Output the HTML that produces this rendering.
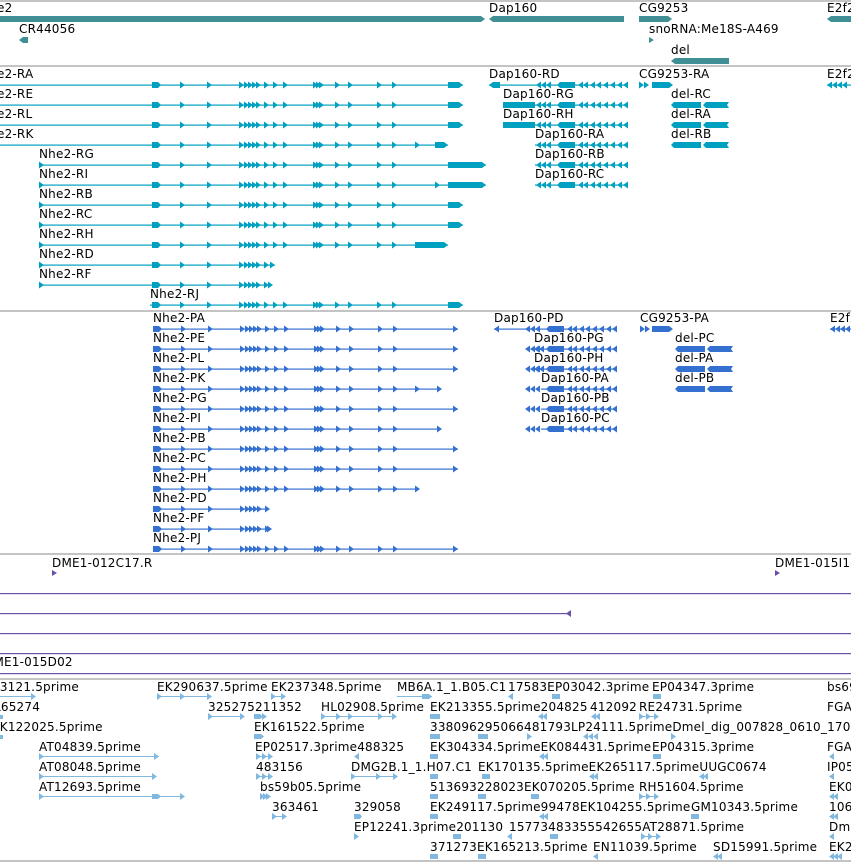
<!DOCTYPE html>
<html><head><meta charset="utf-8">
<style>
html,body{margin:0;padding:0;background:#fff;}
#w{position:relative;width:851px;height:862px;overflow:hidden;background:#fff;}
.t{position:absolute;font-family:"DejaVu Sans","Liberation Sans",sans-serif;font-size:12px;line-height:13px;letter-spacing:0.2px;color:#000;white-space:nowrap;margin-top:-0.5px;}
svg{position:absolute;left:0;top:0;}
</style></head><body><div id="w">
<svg width="851" height="862" viewBox="0 0 851 862">
<defs>
<path id="ar" d="M0 -3.5L5 0L0 3.5Z"/>
<path id="al" d="M5 -3.5L0 0L5 3.5Z"/>
<g id="nxs">
<path d="M152 -3h6l3 3-3 3h-6z"/>
<use href="#ar" x="180"/><use href="#ar" x="207"/>
<use href="#ar" x="239"/><use href="#ar" x="244"/><use href="#ar" x="248"/><use href="#ar" x="252"/><use href="#ar" x="256"/><use href="#ar" x="264"/>
</g>
<g id="nx">
<use href="#nxs"/>
<use href="#ar" x="273"/><use href="#ar" x="283"/>
<use href="#ar" x="313"/><use href="#ar" x="316"/><use href="#ar" x="319"/>
<use href="#ar" x="335"/><use href="#ar" x="348"/><use href="#ar" x="377"/><use href="#ar" x="392"/>
</g>
<g id="dx">
<use href="#al" x="536"/><use href="#al" x="541"/><use href="#al" x="546"/>
<path d="M557 0l3 -3h15v6h-15z"/>
<use href="#al" x="578"/><use href="#al" x="583"/><use href="#al" x="590"/><use href="#al" x="596"/><use href="#al" x="603"/><use href="#al" x="610"/><use href="#al" x="617"/><use href="#al" x="623"/>
</g>
<g id="del"><path d="M671 0l3 -3h27v6h-27z"/><path d="M703 0l3 -3h23l-2 3 2 3h-23z"/></g>
<path id="te" d="M0 -3h11l4 3-4 3h-11z"/>
</defs>
<g fill="#c4c4c4">
<rect x="0" y="0" width="851" height="2"/>
<rect x="0" y="65" width="851" height="2"/>
<rect x="0" y="310" width="851" height="2"/>
<rect x="0" y="553" width="851" height="2"/>
<rect x="0" y="678" width="851" height="2"/>
<rect x="0" y="860" width="851" height="2"/>
</g>
<g fill="#3f8f94">
<path d="M0 16h481l4 3-4 3h-481z"/>
<path d="M489 19l4 -3h131v6h-131z"/>
<path d="M639 16h29l4 3-4 3h-29z"/>
<path d="M827 19l4 -3h20v6h-20z"/>
<path d="M19 40l4 -3h5v6h-5z"/>
<path d="M649 37l5 3-5 3z"/>
<path d="M671 61l4 -3h54v6h-54z"/>
</g>
<g fill="#00a0c0" stroke="none">
<rect x="0" y="84.5" width="463" height="1.2"/><use href="#nx" y="85"/><use href="#te" x="448" y="85"/>
<rect x="0" y="104.5" width="463" height="1.2"/><use href="#nx" y="105"/><use href="#te" x="448" y="105"/>
<rect x="0" y="124.5" width="463" height="1.2"/><use href="#nx" y="125"/><use href="#te" x="448" y="125"/>
<rect x="0" y="144.5" width="448" height="1.2"/><use href="#nx" y="145"/><use href="#ar" x="415" y="145"/><path d="M435 142h9l4 3-4 3h-9z"/>
<rect x="39" y="164.5" width="447" height="1.2"/><use href="#ar" x="39" y="165"/><use href="#nx" y="165"/><path d="M448 162h34l4 3-4 3h-34z"/>
<rect x="39" y="184.5" width="447" height="1.2"/><use href="#ar" x="39" y="185"/><use href="#nx" y="185"/><use href="#ar" x="435" y="185"/><path d="M448 182h34l4 3-4 3h-34z"/>
<rect x="39" y="204.5" width="424" height="1.2"/><use href="#ar" x="39" y="205"/><use href="#nx" y="205"/><use href="#te" x="448" y="205"/>
<rect x="39" y="224.5" width="424" height="1.2"/><use href="#ar" x="39" y="225"/><use href="#nx" y="225"/><use href="#te" x="448" y="225"/>
<rect x="39" y="244.5" width="409" height="1.2"/><use href="#ar" x="39" y="245"/><use href="#nx" y="245"/><path d="M415 242h29l4 3-4 3h-29z"/>
<rect x="39" y="264.5" width="236" height="1.2"/><use href="#ar" x="39" y="265"/><use href="#nxs" y="265"/><use href="#ar" x="270" y="265"/>
<rect x="39" y="284.5" width="233" height="1.2"/><use href="#ar" x="39" y="285"/><use href="#nxs" y="285"/><use href="#ar" x="268" y="285"/>
<rect x="150" y="304.5" width="313" height="1.2"/><use href="#nx" y="305"/><use href="#te" x="448" y="305"/>
<rect x="489" y="84.5" width="138" height="1.2"/><path d="M489 85l4 -3h7v6h-7z"/><use href="#dx" y="85"/>
<rect x="503" y="104.5" width="124" height="1.2"/><path d="M503 102h32v6h-32z"/><use href="#dx" y="105"/>
<rect x="503" y="124.5" width="124" height="1.2"/><path d="M503 122h32v6h-32z"/><use href="#dx" y="125"/>
<rect x="535" y="144.5" width="92" height="1.2"/><use href="#dx" y="145"/>
<rect x="535" y="164.5" width="92" height="1.2"/><use href="#dx" y="165"/>
<rect x="535" y="184.5" width="92" height="1.2"/><use href="#dx" y="185"/>
<use href="#ar" x="639" y="85"/><use href="#ar" x="644" y="85"/><path d="M652 82h17l4 3-4 3h-17z"/>
<use href="#del" y="105"/><use href="#del" y="125"/><use href="#del" y="145"/>
<use href="#al" x="827" y="85"/><use href="#al" x="832" y="85"/><use href="#al" x="837" y="85"/><use href="#al" x="842" y="85"/><rect x="827" y="84.5" width="24" height="1.2"/>
</g>
<g fill="#3470d0">
<g transform="translate(1,0)">
<rect x="152" y="328.5" width="305" height="1.2"/><use href="#nx" y="329"/><use href="#ar" x="452" y="329"/>
<rect x="152" y="348.5" width="305" height="1.2"/><use href="#nx" y="349"/><use href="#ar" x="452" y="349"/>
<rect x="152" y="368.5" width="305" height="1.2"/><use href="#nx" y="369"/><use href="#ar" x="452" y="369"/>
<rect x="152" y="388.5" width="287" height="1.2"/><use href="#nx" y="389"/><use href="#ar" x="414" y="389"/><use href="#ar" x="436" y="389"/>
<rect x="152" y="408.5" width="305" height="1.2"/><use href="#nx" y="409"/><use href="#ar" x="452" y="409"/>
<rect x="152" y="428.5" width="287" height="1.2"/><use href="#nx" y="429"/><use href="#ar" x="436" y="429"/>
<rect x="152" y="448.5" width="305" height="1.2"/><use href="#nx" y="449"/><use href="#ar" x="452" y="449"/>
<rect x="152" y="468.5" width="305" height="1.2"/><use href="#nx" y="469"/><use href="#ar" x="452" y="469"/>
<rect x="152" y="488.5" width="266" height="1.2"/><use href="#nx" y="489"/><use href="#ar" x="414" y="489"/>
<rect x="152" y="508.5" width="115" height="1.2"/><use href="#nxs" y="509"/>
<rect x="152" y="528.5" width="118" height="1.2"/><use href="#nxs" y="529"/><use href="#ar" x="266" y="529"/>
<rect x="152" y="548.5" width="305" height="1.2"/><use href="#nx" y="549"/><use href="#ar" x="452" y="549"/>
</g>
<g transform="translate(-11,0)">
<rect x="505" y="328.5" width="122" height="1.2"/><use href="#al" x="505" y="329"/><use href="#dx" y="329"/>
<rect x="545" y="348.5" width="82" height="1.2"/><use href="#al" x="545" y="349"/><use href="#al" x="550" y="349"/><use href="#dx" y="349"/>
<rect x="545" y="368.5" width="82" height="1.2"/><use href="#al" x="545" y="369"/><use href="#al" x="550" y="369"/><use href="#dx" y="369"/>
</g>
<g transform="translate(-4,0)">
<rect x="545" y="388.5" width="75" height="1.2"/><use href="#dx" y="389" transform="translate(-7,0)"/>
<rect x="545" y="408.5" width="75" height="1.2"/><use href="#dx" y="409" transform="translate(-7,0)"/>
<rect x="545" y="428.5" width="75" height="1.2"/><use href="#dx" y="429" transform="translate(-7,0)"/>
</g>
<use href="#ar" x="640" y="329"/><use href="#ar" x="645" y="329"/><path d="M652 326h17l4 3-4 3h-17z"/>
<g transform="translate(4,0)"><use href="#del" y="349"/><use href="#del" y="369"/><use href="#del" y="389"/></g>
<use href="#al" x="830" y="329"/><use href="#al" x="835" y="329"/><use href="#al" x="840" y="329"/><use href="#al" x="845" y="329"/><rect x="830" y="328.5" width="21" height="1.2"/>
</g>
<g fill="#6a50a8">
<path d="M52 570l5 3-5 3z"/><path d="M775 570l5 3-5 3z"/>
<rect x="0" y="593" width="851" height="1.2"/>
<rect x="0" y="613" width="570" height="1.2"/><path d="M566 613.5l5 -3.5v7z"/>
<rect x="0" y="633" width="851" height="1.2"/>
<rect x="0" y="653" width="851" height="1.2"/>
<rect x="0" y="673" width="851" height="1.2"/>
</g>
<g fill="#80b8e0">
<rect x="0" y="696" width="33" height="1"/><use href="#ar" x="31" y="696.5"/>
<rect x="157" y="696" width="54" height="1"/><use href="#ar" x="157" y="696.5"/><use href="#ar" x="180" y="696.5"/><use href="#ar" x="207" y="696.5"/>
<rect x="271" y="696" width="14" height="1"/><use href="#ar" x="271" y="696.5"/><use href="#ar" x="281" y="696.5"/>
<rect x="397" y="696" width="35" height="1"/><path d="M422 694h7l3 2.5-3 2.5h-7z"/>
<use href="#al" x="508" y="696.5"/><path d="M552 694h8v5h-8z"/><path d="M653 694h8v5h-8z"/>
<path d="M0 715h3v4h-3z"/>
<rect x="208" y="716" width="35" height="1"/><use href="#ar" x="208" y="716.5"/><use href="#ar" x="240" y="716.5"/>
<path d="M254 714h6l3 2.5-3 2.5h-6z"/><use href="#ar" x="262" y="716.5"/>
<rect x="321" y="716" width="75" height="1"/><use href="#ar" x="321" y="716.5"/><use href="#ar" x="336" y="716.5"/><use href="#ar" x="348" y="716.5"/><use href="#ar" x="378" y="716.5"/><use href="#ar" x="392" y="716.5"/>
<path d="M430 714h10v5h-10z"/><use href="#al" x="538" y="716.5"/><use href="#al" x="542" y="716.5"/><use href="#al" x="591" y="716.5"/><use href="#al" x="595" y="716.5"/>
<use href="#ar" x="639" y="716.5"/><use href="#ar" x="646" y="716.5"/><use href="#ar" x="654" y="716.5"/><rect x="639" y="716" width="19" height="1"/>
<path d="M0 735h3v4h-3z"/><path d="M254 734h7l3 2.5-3 2.5h-7z"/>
<path d="M430 734h10v5h-10z"/><path d="M478 734h10v5h-10z"/><use href="#ar" x="527" y="736.5"/><use href="#al" x="583" y="736.5"/><use href="#al" x="588" y="736.5"/><use href="#al" x="593" y="736.5"/><use href="#ar" x="671" y="736.5"/>
<rect x="39" y="756" width="120" height="1"/><use href="#ar" x="39" y="756.5"/><use href="#ar" x="154" y="756.5"/>
<use href="#ar" x="256" y="756.5"/><use href="#ar" x="262" y="756.5"/><use href="#ar" x="268" y="756.5"/><rect x="256" y="756" width="16" height="1"/>
<use href="#al" x="354" y="756.5"/><path d="M430 754h8v5h-8z"/><use href="#al" x="539" y="756.5"/><use href="#al" x="543" y="756.5"/><path d="M653 754h8v5h-8z"/>
<rect x="39" y="776" width="117" height="1"/><use href="#ar" x="39" y="776.5"/><use href="#ar" x="152" y="776.5"/>
<use href="#ar" x="256" y="776.5"/><use href="#ar" x="262" y="776.5"/><use href="#ar" x="268" y="776.5"/><rect x="256" y="776" width="16" height="1"/>
<rect x="351" y="776" width="46" height="1"/><use href="#ar" x="351" y="776.5"/><use href="#ar" x="376" y="776.5"/><use href="#ar" x="393" y="776.5"/>
<path d="M430 774h8v5h-8z"/><path d="M482 774h8v5h-8z"/><use href="#al" x="589" y="776.5"/><use href="#al" x="593" y="776.5"/><use href="#al" x="699" y="776.5"/><use href="#al" x="703" y="776.5"/>
<rect x="39" y="796" width="145" height="1"/><use href="#ar" x="39" y="796.5"/><path d="M152 794h6l3 2.5-3 2.5h-6z"/><use href="#ar" x="180" y="796.5"/>
<use href="#ar" x="260" y="796.5"/><use href="#ar" x="263" y="796.5"/><use href="#ar" x="266" y="796.5"/>
<path d="M430 794h8v5h-8z"/><path d="M478 794h8v5h-8z"/><path d="M531 794h8v5h-8z"/><use href="#ar" x="639" y="796.5"/><use href="#ar" x="646" y="796.5"/><use href="#ar" x="654" y="796.5"/><rect x="639" y="796" width="19" height="1"/>
<rect x="272" y="816" width="14" height="1"/><use href="#ar" x="272" y="816.5"/><use href="#ar" x="282" y="816.5"/>
<path d="M354 814h6l2 2.5-2 2.5h-6z"/><path d="M430 814h8v5h-8z"/><use href="#al" x="539" y="816.5"/><use href="#al" x="543" y="816.5"/><path d="M691 814h8v5h-8z"/>
<use href="#ar" x="354" y="836.5"/><path d="M453 834h8v5h-8z"/><use href="#al" x="507" y="836.5"/><path d="M550 834h8v5h-8z"/><use href="#ar" x="641" y="836.5"/><use href="#ar" x="648" y="836.5"/><use href="#ar" x="656" y="836.5"/><rect x="641" y="836" width="19" height="1"/>
<path d="M430 854h8v5h-8z"/><path d="M478 854h8v5h-8z"/><use href="#al" x="593" y="856.5"/><use href="#al" x="713" y="856.5"/><use href="#al" x="717" y="856.5"/>
<use href="#al" x="829" y="776.5"/><use href="#al" x="829" y="756.5"/><use href="#al" x="829" y="796.5"/><use href="#al" x="833" y="796.5"/><use href="#al" x="829" y="816.5"/><use href="#al" x="833" y="816.5"/><use href="#al" x="829" y="836.5"/><use href="#al" x="829" y="856.5"/><use href="#al" x="833" y="856.5"/><use href="#al" x="837" y="856.5"/>
</g>
</svg>

<div class="t" style="left:-20px;top:2px">Nhe2</div>
<div class="t" style="left:19px;top:23px">CR44056</div>
<div class="t" style="left:489px;top:2px">Dap160</div>
<div class="t" style="left:639px;top:2px">CG9253</div>
<div class="t" style="left:649px;top:23px">snoRNA:Me18S-A469</div>
<div class="t" style="left:671px;top:44px">del</div>
<div class="t" style="left:827px;top:2px">E2f2</div>
<div class="t" style="left:-20px;top:68px">Nhe2-RA</div>
<div class="t" style="left:-20px;top:88px">Nhe2-RE</div>
<div class="t" style="left:-20px;top:108px">Nhe2-RL</div>
<div class="t" style="left:-20px;top:128px">Nhe2-RK</div>
<div class="t" style="left:39px;top:148px">Nhe2-RG</div>
<div class="t" style="left:39px;top:168px">Nhe2-RI</div>
<div class="t" style="left:39px;top:188px">Nhe2-RB</div>
<div class="t" style="left:39px;top:208px">Nhe2-RC</div>
<div class="t" style="left:39px;top:228px">Nhe2-RH</div>
<div class="t" style="left:39px;top:248px">Nhe2-RD</div>
<div class="t" style="left:39px;top:268px">Nhe2-RF</div>
<div class="t" style="left:150px;top:288px">Nhe2-RJ</div>
<div class="t" style="left:489px;top:68px">Dap160-RD</div>
<div class="t" style="left:503px;top:88px">Dap160-RG</div>
<div class="t" style="left:503px;top:108px">Dap160-RH</div>
<div class="t" style="left:535px;top:128px">Dap160-RA</div>
<div class="t" style="left:535px;top:148px">Dap160-RB</div>
<div class="t" style="left:535px;top:168px">Dap160-RC</div>
<div class="t" style="left:639px;top:68px">CG9253-RA</div>
<div class="t" style="left:671px;top:88px">del-RC</div>
<div class="t" style="left:671px;top:108px">del-RA</div>
<div class="t" style="left:671px;top:128px">del-RB</div>
<div class="t" style="left:827px;top:68px">E2f2</div>
<div class="t" style="left:153px;top:312px">Nhe2-PA</div>
<div class="t" style="left:153px;top:332px">Nhe2-PE</div>
<div class="t" style="left:153px;top:352px">Nhe2-PL</div>
<div class="t" style="left:153px;top:372px">Nhe2-PK</div>
<div class="t" style="left:153px;top:392px">Nhe2-PG</div>
<div class="t" style="left:153px;top:412px">Nhe2-PI</div>
<div class="t" style="left:153px;top:432px">Nhe2-PB</div>
<div class="t" style="left:153px;top:452px">Nhe2-PC</div>
<div class="t" style="left:153px;top:472px">Nhe2-PH</div>
<div class="t" style="left:153px;top:492px">Nhe2-PD</div>
<div class="t" style="left:153px;top:512px">Nhe2-PF</div>
<div class="t" style="left:153px;top:532px">Nhe2-PJ</div>
<div class="t" style="left:494px;top:312px">Dap160-PD</div>
<div class="t" style="left:534px;top:332px">Dap160-PG</div>
<div class="t" style="left:534px;top:352px">Dap160-PH</div>
<div class="t" style="left:541px;top:372px">Dap160-PA</div>
<div class="t" style="left:541px;top:392px">Dap160-PB</div>
<div class="t" style="left:541px;top:412px">Dap160-PC</div>
<div class="t" style="left:640px;top:312px">CG9253-PA</div>
<div class="t" style="left:675px;top:332px">del-PC</div>
<div class="t" style="left:675px;top:352px">del-PA</div>
<div class="t" style="left:675px;top:372px">del-PB</div>
<div class="t" style="left:830px;top:312px">E2f2</div>
<div class="t" style="left:52px;top:557px">DME1-012C17.R</div>
<div class="t" style="left:775px;top:557px">DME1-015I1</div>
<div class="t" style="left:-16px;top:656px">DME1-015D02</div>
<div class="t" style="left:-23px;top:681px">AT13121.5prime</div>
<div class="t" style="left:157px;top:681px">EK290637.5prime</div>
<div class="t" style="left:271px;top:681px">EK237348.5prime</div>
<div class="t" style="left:397px;top:681px">MB6A.1_1.B05.C1</div>
<div class="t" style="left:508px;top:681px">17583EP03042.3prime</div>
<div class="t" style="left:652px;top:681px">EP04347.3prime</div>
<div class="t" style="left:827px;top:681px">bs69</div>
<div class="t" style="left:-6px;top:701px">L65274</div>
<div class="t" style="left:208px;top:701px">325275211352</div>
<div class="t" style="left:321px;top:701px">HL02908.5prime</div>
<div class="t" style="left:430px;top:701px">EK213355.5prime204825</div>
<div class="t" style="left:590px;top:701px">412092</div>
<div class="t" style="left:639px;top:701px">RE24731.5prime</div>
<div class="t" style="left:827px;top:701px">FGA</div>
<div class="t" style="left:-8px;top:721px">EK122025.5prime</div>
<div class="t" style="left:254px;top:721px">EK161522.5prime</div>
<div class="t" style="left:430px;top:721px">338096295066481793LP24111.5primeDmel_dig_007828_0610_1707</div>
<div class="t" style="left:39px;top:741px">AT04839.5prime</div>
<div class="t" style="left:255px;top:741px">EP02517.3prime488325</div>
<div class="t" style="left:430px;top:741px">EK304334.5primeEK084431.5prime</div>
<div class="t" style="left:652px;top:741px">EP04315.3prime</div>
<div class="t" style="left:827px;top:741px">FGA</div>
<div class="t" style="left:39px;top:761px">AT08048.5prime</div>
<div class="t" style="left:256px;top:761px">483156</div>
<div class="t" style="left:351px;top:761px">DMG2B.1_1.H07.C1</div>
<div class="t" style="left:478px;top:761px">EK170135.5primeEK265117.5primeUUGC0674</div>
<div class="t" style="left:827px;top:761px">IP05</div>
<div class="t" style="left:39px;top:781px">AT12693.5prime</div>
<div class="t" style="left:260px;top:781px">bs59b05.5prime</div>
<div class="t" style="left:430px;top:781px">513693228023EK070205.5prime</div>
<div class="t" style="left:639px;top:781px">RH51604.5prime</div>
<div class="t" style="left:829px;top:781px">EK0</div>
<div class="t" style="left:272px;top:801px">363461</div>
<div class="t" style="left:354px;top:801px">329058</div>
<div class="t" style="left:430px;top:801px">EK249117.5prime99478EK104255.5prime</div>
<div class="t" style="left:691px;top:801px">GM10343.5prime</div>
<div class="t" style="left:829px;top:801px">106</div>
<div class="t" style="left:354px;top:821px">EP12241.3prime201130</div>
<div class="t" style="left:509px;top:821px">15773483355542655AT28871.5prime</div>
<div class="t" style="left:829px;top:821px">Dm</div>
<div class="t" style="left:430px;top:841px">371273EK165213.5prime</div>
<div class="t" style="left:593px;top:841px">EN11039.5prime</div>
<div class="t" style="left:713px;top:841px">SD15991.5prime</div>
<div class="t" style="left:829px;top:841px">EK2</div>
</div></body></html>
